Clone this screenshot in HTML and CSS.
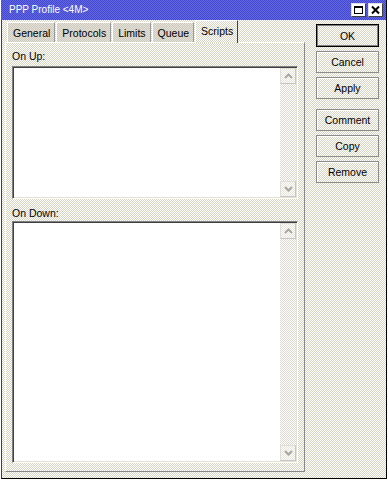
FILE: index.html
```html
<!DOCTYPE html>
<html lang="en">
<head>
  <meta charset="utf-8">
  <title>PPP Profile &lt;4M&gt;</title>
  <link rel="stylesheet" href="styles.css">
</head>
<body>
  <div class="window">
    <div class="titlebar">
      <span class="title">PPP Profile &lt;4M&gt;</span>
      <div class="caption-buttons">
        <span class="cap-btn">
          <svg width="13" height="12" viewBox="0 0 13 12"><rect x="2.5" y="2.5" width="8" height="7" fill="none" stroke="#000"/><rect x="2" y="2" width="9" height="2" fill="#000"/></svg>
        </span>
        <span class="cap-btn">
          <svg width="13" height="12" viewBox="0 0 13 12"><path d="M3 2.5l7 7M10 2.5l-7 7" stroke="#000" stroke-width="2"/></svg>
        </span>
      </div>
    </div>

    <div class="main">
      <div class="sheet">
        <div class="tabs">
          <span class="tab">General</span>
          <span class="tab">Protocols</span>
          <span class="tab">Limits</span>
          <span class="tab">Queue</span>
          <span class="tab active">Scripts</span>
        </div>
        <div class="page">
          <label class="field-label">On Up:</label>
          <div class="field up-field">
            <div class="field-body"></div>
            <div class="vscroll">
              <span class="sbtn"><svg width="9" height="6" viewBox="0 0 9 6"><path d="M1 5l3.5-3.5L8 5" fill="none" stroke="#a8a8a0" stroke-width="2"/></svg></span>
              <span class="strack"></span>
              <span class="sbtn"><svg width="9" height="6" viewBox="0 0 9 6"><path d="M1 1l3.5 3.5L8 1" fill="none" stroke="#a8a8a0" stroke-width="2"/></svg></span>
            </div>
          </div>
          <label class="field-label down-label">On Down:</label>
          <div class="field down-field">
            <div class="field-body"></div>
            <div class="vscroll">
              <span class="sbtn"><svg width="9" height="6" viewBox="0 0 9 6"><path d="M1 5l3.5-3.5L8 5" fill="none" stroke="#a8a8a0" stroke-width="2"/></svg></span>
              <span class="strack"></span>
              <span class="sbtn"><svg width="9" height="6" viewBox="0 0 9 6"><path d="M1 1l3.5 3.5L8 1" fill="none" stroke="#a8a8a0" stroke-width="2"/></svg></span>
            </div>
          </div>
        </div>
      </div>

      <div class="actions">
        <button class="btn default">OK</button>
        <button class="btn">Cancel</button>
        <button class="btn">Apply</button>
        <button class="btn gap">Comment</button>
        <button class="btn">Copy</button>
        <button class="btn">Remove</button>
      </div>
    </div>
  </div>
</body>
</html>
```

FILE: styles.css
```css
body {
  margin: 0;
  background: #fff;
  font-family: "Liberation Sans", Arial, sans-serif;
  font-size: 10.5px;
  color: #000;
}

/* 1px checker, like the old 256-colour dithering */
.window,
.tab.active {
  background-color: #fff;
  background-image: conic-gradient(#d8d4c2 25%, transparent 0 50%, #d8d4c2 0 75%, transparent 0);
  background-size: 2px 2px;
}

.window {
  width: 386px;
  height: 479px;
  margin-left: 1px;
  box-sizing: border-box;
  border-left: 1px solid #404040;
  border-right: 1px solid #000;
  border-bottom: 1px solid #000;
}

.titlebar {
  height: 20px;
  margin-left: -1px;
  display: flex;
  align-items: center;
  justify-content: space-between;
  padding: 0 3px 0 8px;
  background-color: #6468e0;
  background-image: conic-gradient(#4348d0 25%, transparent 0 50%, #4348d0 0 75%, transparent 0);
  background-size: 2px 2px;
  color: #fff;
}

.title {
  font-size: 10px;
  padding-bottom: 1px;
}

.caption-buttons {
  display: flex;
  gap: 2px;
}

.cap-btn {
  display: flex;
  width: 15px;
  height: 14px;
  box-sizing: border-box;
  align-items: center;
  justify-content: center;
  background: #fff;
  border: 1px solid #404040;
  border-top-color: #e0e0e0;
  border-left-color: #e0e0e0;
}

.main {
  display: flex;
  padding-left: 3px;
}

.sheet {
  width: 300px;
  display: flex;
  flex-direction: column;
}

.tabs {
  display: flex;
  align-items: flex-end;
  height: 22px;
  padding-left: 2px;
  gap: 1px;
}

.tab {
  height: 20px;
  box-sizing: border-box;
  padding: 4px 4px 0 5px;
  background-color: #e4e1d8;
  background-image: conic-gradient(#cdc9bd 25%, transparent 0 50%, #cdc9bd 0 75%, transparent 0);
  background-size: 2px 2px;
  border-top: 1px solid #fff;
  border-left: 1px solid #fff;
  border-right: 1px solid #9a9a9a;
}

.tab.active {
  height: 23px;
  margin-bottom: -1px;
  padding-top: 4px;
  border-right-color: #404040;
  position: relative;
}

.page {
  height: 430px;
  box-sizing: border-box;
  border-top: 1px solid #fff;
  border-left: 1px solid #fff;
  border-right: 1px solid #888;
  border-bottom: 1px solid #888;
  padding: 7px 6px 8px 6px;
  display: flex;
  flex-direction: column;
}

.field-label {
  line-height: 13px;
  margin-bottom: 3px;
}

.field-label.down-label {
  margin-bottom: 1px;
}

.field {
  display: flex;
  box-sizing: border-box;
  border-top: 1px solid #808080;
  border-left: 1px solid #808080;
  border-right: 1px solid #fff;
  border-bottom: 1px solid #fff;
  box-shadow: inset 1px 1px 0 #404040, inset -1px -1px 0 #e4e1d8;
  padding: 1px;
}

.up-field {
  height: 133px;
  margin-bottom: 8px;
}

.down-field {
  height: 242px;
}

.field-body {
  flex: 1;
  background: #fff;
}

.vscroll {
  width: 16px;
  display: flex;
  flex-direction: column;
  background-color: #fff;
  background-image: conic-gradient(#dcd9d0 25%, transparent 0 50%, #dcd9d0 0 75%, transparent 0);
  background-size: 2px 2px;
}

.sbtn {
  height: 16px;
  box-sizing: border-box;
  display: flex;
  align-items: center;
  justify-content: center;
  border: 1px solid #e0ded6;
  border-right-color: #c8c6be;
  border-bottom-color: #c8c6be;
  background-color: #fff;
  background-image: conic-gradient(#e6e3da 25%, transparent 0 50%, #e6e3da 0 75%, transparent 0);
  background-size: 2px 2px;
}

.strack {
  flex: 1;
}

.actions {
  width: 63px;
  margin-left: 11px;
  padding-top: 4px;
  display: flex;
  flex-direction: column;
  gap: 4px;
}

.btn {
  height: 22px;
  padding: 0;
  font-family: "Liberation Sans", Arial, sans-serif;
  font-size: 10.5px;
  color: #000;
  background: transparent;
  border: 1px solid #8c8c8c;
  box-shadow: inset 1px 1px 0 #fff;
}

.btn.default {
  height: 23px;
  border-color: #000;
  box-shadow: inset 0 0 0 1px #808080;
}

.btn.gap {
  margin-top: 6px;
}
```
